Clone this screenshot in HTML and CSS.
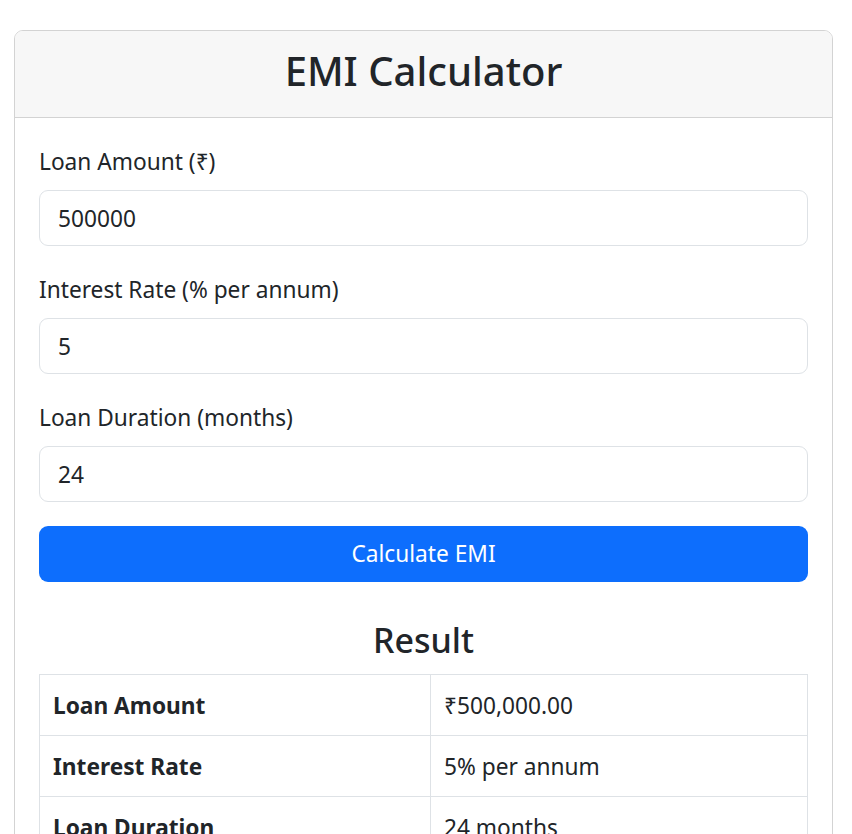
FILE: index.html
```html
<!DOCTYPE html>
<html lang="en">

<head>
    <meta charset="UTF-8">
    <meta name="viewport" content="width=device-width, initial-scale=1.0">
    <title>EMI Calculator</title>
    <link rel="stylesheet" href="styles.css">
</head>

<body>
    <div class="page">
        <div class="card">
            <div class="card-header">
                <h1>EMI Calculator</h1>
            </div>
            <div class="card-body">
                <form id="emiForm">
                    <div class="field">
                        <label for="amount">Loan Amount (₹)</label>
                        <input type="number" id="amount" value="500000">
                    </div>
                    <div class="field">
                        <label for="rate">Interest Rate (% per annum)</label>
                        <input type="number" id="rate" value="5">
                    </div>
                    <div class="field">
                        <label for="months">Loan Duration (months)</label>
                        <input type="number" id="months" value="24">
                    </div>
                    <button type="submit">Calculate EMI</button>
                </form>

                <h3 class="result-title">Result</h3>
                <table class="result">
                    <tr>
                        <th>Loan Amount</th>
                        <td>₹500,000.00</td>
                    </tr>
                    <tr>
                        <th>Interest Rate</th>
                        <td>5% per annum</td>
                    </tr>
                    <tr>
                        <th>Loan Duration</th>
                        <td>24 months</td>
                    </tr>
                    <tr>
                        <th>Monthly EMI</th>
                        <td>₹21,935.69</td>
                    </tr>
                    <tr>
                        <th>Total Interest</th>
                        <td>₹26,456.57</td>
                    </tr>
                    <tr>
                        <th>Total Payment</th>
                        <td>₹526,456.57</td>
                    </tr>
                </table>
            </div>
        </div>
    </div>
</body>

</html>
```

FILE: styles.css
```css
body {
    margin: 0;
    font-family: "Noto Sans", "DejaVu Sans", sans-serif;
    font-size: 22.7px;
    line-height: 36px;
    color: #212529;
    background: #fff;
}

.page {
    padding: 30px 19px 0 14px;
}

.card {
    border: 1px solid #d3d3d3;
    border-radius: 9px;
    overflow: hidden;
}

.card-header {
    background-color: #f7f7f7;
    border-bottom: 1px solid #d3d3d3;
    padding: 9px 24px 15px;
    text-align: center;
}

.card-header h1 {
    margin: 0;
    font-size: 40px;
    font-weight: 500;
    line-height: 62px;
}

.card-body {
    padding: 24px;
}

.field {
    margin-bottom: 24px;
}

label {
    display: block;
    margin-bottom: 12px;
    padding-top: 2px;
    height: 34px;
}

input {
    display: block;
    box-sizing: border-box;
    width: 100%;
    height: 56px;
    padding: 9px 18px;
    font: inherit;
    color: #212529;
    border: 1px solid #dee2e6;
    border-radius: 9px;
    -moz-appearance: textfield;
}

input::-webkit-outer-spin-button,
input::-webkit-inner-spin-button {
    -webkit-appearance: none;
    margin: 0;
}

button {
    display: block;
    width: 100%;
    height: 56px;
    font: inherit;
    color: #fff;
    background-color: #0d6efd;
    border: none;
    border-radius: 9px;
    cursor: pointer;
}

.result-title {
    margin: 37px 0 12px;
    text-align: center;
    font-size: 34px;
    font-weight: 500;
    line-height: 43px;
}

.result {
    width: 100%;
    border-collapse: collapse;
}

.result th,
.result td {
    border: 1px solid #dee2e6;
    padding: 13px 13px 11px;
    text-align: left;
}

.result th {
    width: 364px;
    font-weight: 700;
}
```
